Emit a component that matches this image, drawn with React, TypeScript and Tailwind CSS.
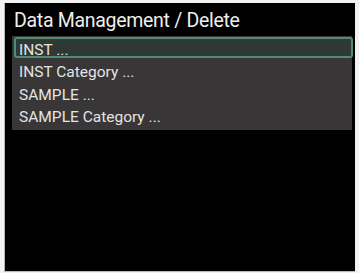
import React from 'react';

const items = ['INST ...', 'INST Category ...', 'SAMPLE ...', 'SAMPLE Category ...'];

const App: React.FC = () => {
  return (
    <div className="w-[359px] h-[273px] bg-[#f2f2f2] pt-[3px] pl-[4px] pr-[4px] pb-[1px]" style={{ fontFamily: 'Roboto, "Liberation Sans", sans-serif' }}>
      <div className="h-full bg-black border-l border-b border-[#b8b8b8] flex flex-col">
        <h1 className="pt-[5.5px] pl-[9px] text-[19.5px] leading-[24px] font-normal text-[#eeeeee] tracking-[-0.3px]">
          Data Management / Delete
        </h1>
        <ul className="relative mt-[3.5px] ml-[7px] mr-[3px] pt-[2.5px] pb-[1.5px] bg-[#383636]">
          {items.map((label, i) => (
            <li key={label} className="relative h-[22.5px] pl-[7px] text-[15.5px] leading-[22.5px] text-[#e4e4e4]">
              {i === 0 && (
                <span className="absolute -top-[1.5px] left-[2px] -right-[1px] h-[21px] rounded-[3px] border-2 border-[#4f8c74] bg-[#2f3835]" />
              )}
              <span className="relative">{label}</span>
            </li>
          ))}
        </ul>
      </div>
    </div>
  );
};

export default App;
